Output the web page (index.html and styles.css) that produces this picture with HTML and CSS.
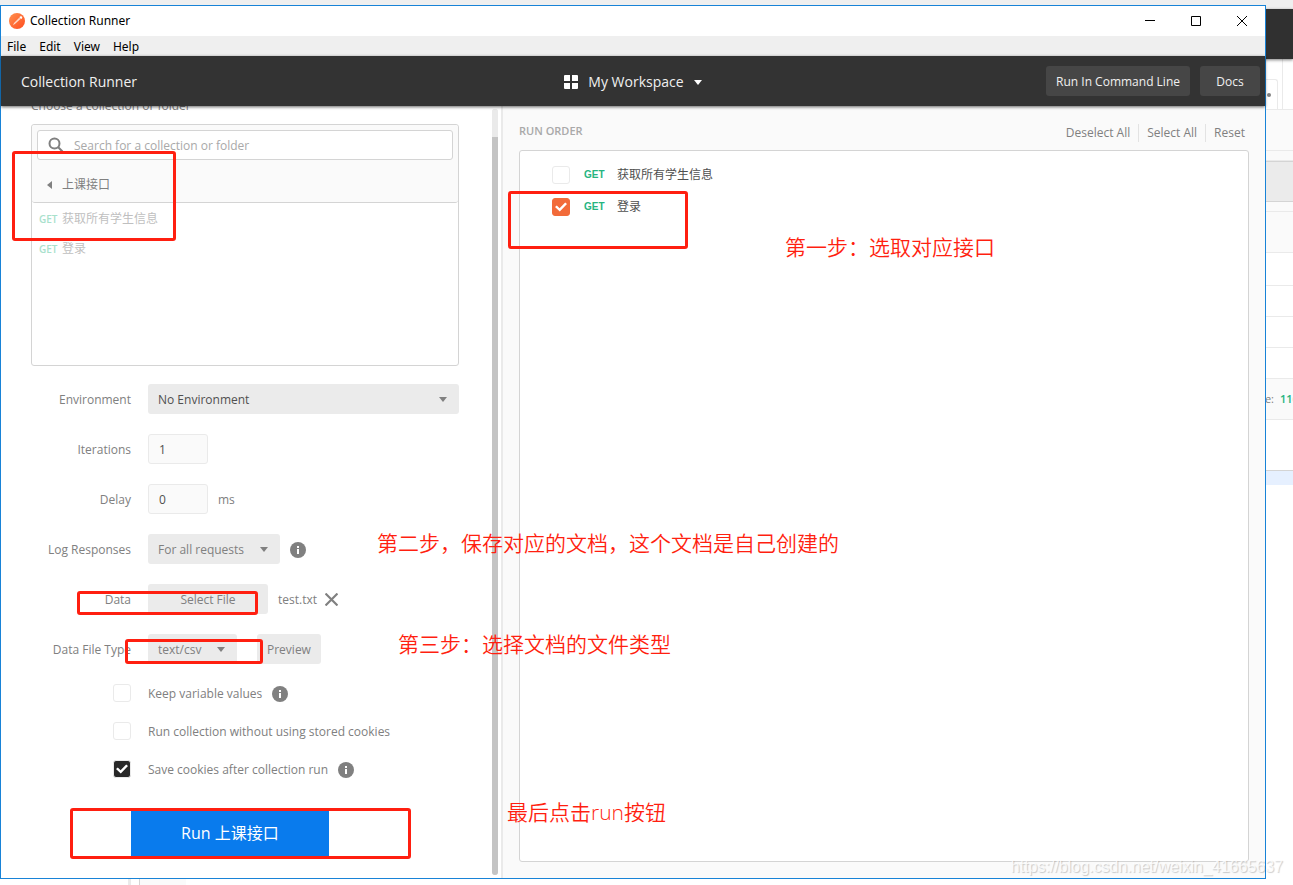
FILE: index.html
```
<!DOCTYPE html>
<html lang="zh-CN">
<head>
  <meta charset="UTF-8">
  <meta name="viewport" content="width=device-width, initial-scale=1.0">
  <title>Collection Runner</title>
  <link rel="stylesheet" href="styles.css">
</head>
<body>
  <!-- Main app window, partly covered -->
  <div class="backdrop">
    <div class="back-top"></div>
    <div class="back-header"></div>
    <div class="back-tabs"><div class="back-tab"><span class="back-dot"></span></div></div>
    <div class="back-row back-name"></div>
    <div class="back-row back-strip"></div>
    <div class="back-row back-url"></div>
    <div class="back-row back-strip"></div>
    <div class="back-row back-params"></div>
    <div class="back-row back-first"></div>
    <div class="back-row"></div>
    <div class="back-row"></div>
    <div class="back-row"></div>
    <div class="back-row back-status"><span>e:</span><b>116</b></div>
    <div class="back-row back-body"></div>
    <div class="back-line"></div>
  </div>
  <div class="back-bottom"></div>

  <!-- Runner window -->
  <div class="window">
    <div class="titlebar">
      <svg class="logo" viewBox="0 0 16 16">
        <defs>
          <linearGradient id="logo-fill" x1="0" y1="0" x2="1" y2="1">
            <stop offset="0" stop-color="#ff9150"/>
            <stop offset="1" stop-color="#ff4d1f"/>
          </linearGradient>
        </defs>
        <circle cx="8" cy="8" r="8" fill="url(#logo-fill)"/>
        <path d="M4 12.200 5 10 10.200 4.800 11.500 6 6.200 10.800Z" fill="#ffd9c7"/>
        <path d="M10.500 4.500a1.400 1.400 0 1 1 1.500 1.500Z" fill="#fff"/>
      </svg>
      <span class="window-title">Collection Runner</span>
      <div class="window-buttons">
        <button aria-label="Minimize"><svg viewBox="0 0 10 10"><path d="M0 4.500H10"/></svg></button>
        <button aria-label="Maximize"><svg viewBox="0 0 10 10"><path d="M.5 .5H9.500V9.500H.5Z"/></svg></button>
        <button aria-label="Close"><svg viewBox="0 0 10 10"><path d="M0 0 10 10M10 0 0 10"/></svg></button>
      </div>
    </div>
    <nav class="menubar">
      <a href="#">File</a>
      <a href="#">Edit</a>
      <a href="#">View</a>
      <a href="#">Help</a>
    </nav>
    <header class="header">
      <h1>Collection Runner</h1>
      <button class="workspace">
        <svg viewBox="0 0 14 14"><path d="M0 1a1 1 0 0 1 1-1h5v6H0ZM8 0h5a1 1 0 0 1 1 1v5H8ZM0 8h6v6H1a1 1 0 0 1-1-1ZM8 8h6v5a1 1 0 0 1-1 1H8Z"/></svg>
        My Workspace
        <span class="caret"></span>
      </button>
      <div class="header-actions">
        <button>Run In Command Line</button>
        <button>Docs</button>
      </div>
    </header>

    <main class="content">
      <section class="config">
        <form class="form">
          <p class="hint">Choose a collection or folder</p>
          <div class="picker">
            <div class="picker-head">
              <label class="search">
                <svg viewBox="0 0 16 16"><circle cx="6.500" cy="6.500" r="5"/><path d="M10.200 10.200 14.500 14.500"/></svg>
                <input type="text" placeholder="Search for a collection or folder" aria-label="Search for a collection or folder">
              </label>
              <button type="button" class="back"><span class="caret-left"></span>上课接口</button>
            </div>
            <ul class="picker-list">
              <li><b>GET</b>获取所有学生信息</li>
              <li><b>GET</b>登录</li>
            </ul>
          </div>

          <div class="row">
            <label for="env">Environment</label>
            <div class="select select-env"><select id="env"><option>No Environment</option></select></div>
          </div>
          <div class="row">
            <label for="iterations">Iterations</label>
            <input class="number" id="iterations" type="text" value="1">
          </div>
          <div class="row">
            <label for="delay">Delay</label>
            <input class="number" id="delay" type="text" value="0">
            <span>ms</span>
          </div>
          <div class="row">
            <label for="log">Log Responses</label>
            <div class="select select-log"><select id="log"><option>For all requests</option></select></div>
            <svg class="info" viewBox="0 0 16 16"><circle cx="8" cy="8" r="8"/><path d="M7 4h2v2H7ZM7 7h2v5H7Z"/></svg>
          </div>
          <div class="row">
            <label for="file">Data</label>
            <button type="button" class="btn btn-file" id="file">Select File</button>
            <span>test.txt</span>
            <button type="button" class="remove" aria-label="Remove file"><svg viewBox="0 0 12 12"><path d="M.5 .5 11.500 11.500M11.500 .5 .5 11.500"/></svg></button>
          </div>
          <div class="row">
            <label for="type">Data File Type</label>
            <div class="select select-type"><select id="type"><option>text/csv</option></select></div>
            <button type="button" class="btn btn-preview">Preview</button>
          </div>

          <div class="checks">
            <div class="check">
              <input type="checkbox" id="keep">
              <label for="keep">Keep variable values</label>
              <svg class="info" viewBox="0 0 16 16"><circle cx="8" cy="8" r="8"/><path d="M7 4h2v2H7ZM7 7h2v5H7Z"/></svg>
            </div>
            <div class="check">
              <input type="checkbox" id="nocookies">
              <label for="nocookies">Run collection without using stored cookies</label>
            </div>
            <div class="check">
              <input type="checkbox" id="save" checked>
              <label for="save">Save cookies after collection run</label>
              <svg class="info" viewBox="0 0 16 16"><circle cx="8" cy="8" r="8"/><path d="M7 4h2v2H7ZM7 7h2v5H7Z"/></svg>
            </div>
          </div>

          <button type="button" class="run">Run 上课接口</button>
        </form>
        <div class="scrollbar"><div class="thumb"></div></div>
      </section>

      <section class="order">
        <div class="order-head">
          <h2>RUN ORDER</h2>
          <div class="order-actions">
            <button>Deselect All</button>
            <button>Select All</button>
            <button>Reset</button>
          </div>
        </div>
        <div class="order-list">
          <label class="request"><input type="checkbox"><b>GET</b>获取所有学生信息</label>
          <label class="request"><input type="checkbox" checked><b>GET</b>登录</label>
        </div>
      </section>
    </main>
  </div>

  <!-- Notes drawn over the window -->
  <div class="mark mark-collection"></div>
  <div class="mark mark-request"></div>
  <div class="mark mark-data"></div>
  <div class="mark mark-type"></div>
  <div class="mark mark-run"></div>
  <p class="note note-first">第一步：选取对应接口</p>
  <p class="note note-second">第二步，保存对应的文档，这个文档是自己创建的</p>
  <p class="note note-third">第三步：选择文档的文件类型</p>
  <p class="note note-last">最后点击run按钮</p>
  <p class="watermark">https://blog.csdn.net/weixin_41665637</p>
</body>
</html>
```
FILE: styles.css
```
* {
  box-sizing: border-box;
}
body {
  margin: 0;
  height: 100vh;
  position: relative;
  overflow: hidden;
  background: #fff;
  color: #808080;
  font: 12px/18px "Open Sans", "Noto Sans CJK SC", sans-serif;
}
h1, h2, p, ul {
  margin: 0;
  padding: 0;
}
button, input, select {
  font: inherit;
  color: inherit;
  margin: 0;
  padding: 0;
  border: none;
  background: none;
}
a {
  color: inherit;
  text-decoration: none;
}

/* Window behind */
.backdrop {
  display: flex;
  flex-direction: column;
}
.back-top {
  height: 9px;
  background: #efefef;
}
.back-header {
  height: 50px;
  background: #303030;
  box-shadow: 0 1px 3px rgba(0, 0, 0, 0.5);
  position: relative;
}
.back-tabs {
  height: 51px;
  padding-right: 10px;
  border-bottom: 1px solid #eaeaea;
  display: flex;
  justify-content: flex-end;
  align-items: flex-end;
}
.back-tabs::after {
  content: "";
  order: 1;
  align-self: stretch;
  margin-left: 4px;
  border-left: 1px solid #eaeaea;
}
.back-tab {
  width: 40px;
  height: 30px;
  padding: 13px 6px 0 0;
  border: 1px solid #eaeaea;
  border-width: 1px 1px 0 0;
  border-radius: 0 3px 0 0;
  display: flex;
  justify-content: flex-end;
}
.back-dot {
  width: 4px;
  height: 4px;
  border-radius: 2px;
  background: #808080;
}
.back-row {
  height: 31px;
  border-bottom: 1px solid #eaeaea;
}
.back-name {
  height: 41px;
  background: #fafafa;
}
.back-strip {
  height: 10px;
  background: #fafafa;
}
.back-url {
  height: 41px;
  background: #ebebeb;
  border: solid #d4d4d4;
  border-width: 1px 0;
}
.back-params {
  height: 41px;
  background: #fafafa;
}
.back-first {
  height: 33px;
}
.back-status {
  height: 41px;
  background: #fafafa;
  display: flex;
  gap: 6px;
  align-items: center;
  justify-content: flex-end;
  font-size: 11px;
}
.back-status b {
  width: 13px;
  overflow: hidden;
  font-weight: 600;
  color: #26b47f;
}
.back-body {
  height: 51px;
  border-color: #d4d4d4;
}
.back-line {
  height: 14px;
  background: #e6f0ff;
}
.back-bottom {
  position: absolute;
  left: 128px;
  bottom: 0;
  width: 58px;
  height: 6px;
  border-left: 3px solid #eaeaea;
  background: linear-gradient(to right, #fff 8px, #d4d4d4 8px, #d4d4d4 9px, #fafafa 9px);
}

/* Window frame */
.window {
  position: absolute;
  inset: 5px 27px 6px 0;
  display: flex;
  flex-direction: column;
  background: #fff;
  border: 1px solid #1883d7;
}
.titlebar {
  height: 30px;
  padding-left: 8px;
  display: flex;
  align-items: center;
  flex-shrink: 0;
  color: #000;
  font-family: "Noto Sans", sans-serif;
}
.logo {
  width: 16px;
  height: 16px;
  margin-right: 5px;
}
.window-buttons {
  margin-left: auto;
  display: flex;
}
.window-buttons button {
  width: 46px;
  height: 28px;
  display: flex;
  align-items: center;
  justify-content: center;
}
.window-buttons svg {
  width: 10px;
  height: 10px;
  fill: none;
  stroke: #000;
}
.menubar {
  height: 20px;
  padding: 2px 0 0 6px;
  display: flex;
  gap: 13px;
  align-items: center;
  flex-shrink: 0;
  background: #efefef;
  color: #000;
  font-family: "Noto Sans", sans-serif;
}
.header {
  height: 50px;
  padding: 2px 5px 0;
  display: grid;
  grid-template-columns: 1fr auto 1fr;
  align-items: center;
  flex-shrink: 0;
  position: relative;
  z-index: 1;
  background: #333;
  color: #f0f0f0;
  box-shadow: 0 1px 3px rgba(0, 0, 0, 0.6);
}
.header h1 {
  padding-left: 15px;
  font-size: 14px;
  font-weight: 500;
}
.workspace {
  display: flex;
  align-items: center;
  gap: 10px;
  font-size: 14px;
  font-weight: 500;
}
.workspace svg {
  width: 14px;
  height: 14px;
  fill: #fff;
}
.caret {
  border: 4px solid transparent;
  border-top: 5px solid #fff;
  border-bottom: none;
}
.header-actions {
  padding-bottom: 2px;
  display: flex;
  justify-content: flex-end;
  gap: 10px;
}
.header-actions button {
  height: 30px;
  min-width: 60px;
  padding: 2px 10px 0;
  border-radius: 3px;
  background: #464646;
  font-weight: 500;
}

/* Left side */
.content {
  flex: 1;
  min-height: 0;
  display: flex;
}
.config {
  width: 502px;
  flex-shrink: 0;
  padding-right: 3px;
  display: flex;
  justify-content: space-between;
  overflow: hidden;
  border-right: 2px solid #eaeaea;
}
.form {
  width: 458px;
  padding-left: 30px;
  margin-top: -9px;
}
.hint {
  margin-bottom: 9px;
}
.picker {
  height: 242px;
  margin-bottom: 18px;
  border: 1px solid #d4d4d4;
  border-radius: 3px;
}
.picker-head {
  padding: 5px 5px 4px;
  background: #fafafa;
  border-bottom: 1px solid #d4d4d4;
  border-radius: 3px;
}
.search {
  height: 30px;
  padding: 0 10px;
  display: flex;
  align-items: center;
  gap: 10px;
  background: #fff;
  border: 1px solid #d4d4d4;
  border-radius: 3px;
}
.search svg {
  width: 16px;
  height: 16px;
  fill: none;
  stroke: #808080;
  stroke-width: 2;
}
.search input {
  flex: 1;
  padding-top: 2px;
  outline: none;
}
.search input::placeholder {
  color: #a9a9a9;
}
.back {
  height: 38px;
  padding: 12px 0 0 10px;
  display: flex;
  align-items: center;
  gap: 10px;
}
.caret-left {
  border: 4px solid transparent;
  border-right: 5px solid #808080;
  border-left: none;
}
.picker-list {
  list-style: none;
}
.picker-list li {
  height: 30px;
  padding: 2px 0 0 7px;
  display: flex;
  align-items: center;
  color: #bfbfbf;
}
.picker-list b {
  width: 23px;
  font-size: 10px;
  font-weight: 600;
  color: #a8e1cc;
}
.row {
  height: 30px;
  margin-bottom: 20px;
  display: flex;
  align-items: center;
  gap: 10px;
}
.row > label {
  width: 100px;
  margin-right: 7px;
  text-align: right;
}
.row > label, .row > span, .check label {
  padding-top: 2px;
}
.select {
  position: relative;
  height: 30px;
}
.select::after {
  content: "";
  position: absolute;
  right: 12px;
  top: 13px;
  border: 4px solid transparent;
  border-top: 5px solid #808080;
  border-bottom: none;
  pointer-events: none;
}
.select select {
  width: 100%;
  height: 100%;
  padding: 2px 0 0 10px;
  appearance: none;
  background: #ebebeb;
  border-radius: 3px;
}
.select-env {
  flex: 1;
  color: #505050;
}
.select-log {
  width: 132px;
}
.select-type {
  width: 89px;
  margin-right: 10px;
}
.number {
  width: 60px;
  height: 30px;
  padding-left: 10px;
  background: #fafafa;
  border: 1px solid #eaeaea;
  border-radius: 3px;
  color: #505050;
}
.btn {
  height: 30px;
  padding: 2px 10px 0;
  background: #ebebeb;
  border-radius: 3px;
}
.btn-file {
  width: 120px;
}
.info {
  width: 16px;
  height: 16px;
  margin-top: 2px;
  fill: #fff;
}
.info circle {
  fill: #808080;
}
.remove {
  display: flex;
  margin-left: -2px;
}
.remove svg {
  width: 13px;
  height: 13px;
  stroke: #808080;
  stroke-width: 2;
}
.checks {
  display: flex;
  flex-direction: column;
  gap: 20px;
}
.check {
  padding-left: 82px;
  height: 18px;
  display: flex;
  align-items: center;
  gap: 10px;
}
.check label {
  margin-left: 7px;
}
input[type="checkbox"] {
  width: 18px;
  height: 18px;
  flex-shrink: 0;
  display: grid;
  place-items: center;
  appearance: none;
  background: #fff;
  border: 1px solid #eaeaea;
  border-radius: 3px;
}
input[type="checkbox"]:checked {
  background: #282828;
}
input[type="checkbox"]:checked::after {
  content: "";
  width: 12px;
  height: 10px;
  background: #fff;
  clip-path: polygon(0 50%, 15% 35%, 38% 62%, 85% 5%, 100% 20%, 40% 95%);
}
.run {
  display: block;
  height: 45px;
  margin: 33px 0 0 100px;
  padding: 0 50px 2px;
  background: #097bed;
  color: #fff;
  font-size: 16px;
  font-weight: 400;
}
.scrollbar {
  width: 6px;
  margin: 3px 0;
  border-radius: 3px;
  background: #eaeaea;
}
.thumb {
  height: 100%;
  border-top: 28px solid #eaeaea;
  border-radius: 3px;
  background: #c4c4c4;
}

/* Right side */
.order {
  flex: 1;
  padding: 16px;
  display: flex;
  flex-direction: column;
  background: #fafafa;
}
.order-head {
  display: flex;
  justify-content: space-between;
  margin-bottom: 8px;
}
.order-head h2 {
  font-size: 11px;
  font-weight: 600;
  line-height: 18px;
  color: #a9a9a9;
}
.order-actions {
  display: flex;
  align-items: center;
  padding: 2px 4px 0 0;
}
.order-actions button + button {
  margin-left: 8px;
  padding-left: 8px;
  border-left: 1px solid #e3e3e3;
}
.order-list {
  flex: 1;
  padding: 8px 32px;
  background: #fff;
  border: 1px solid #d4d4d4;
  border-radius: 3px;
}
.request {
  height: 32px;
  display: flex;
  align-items: center;
  color: #505050;
}
.request b {
  width: 33px;
  margin-left: 14px;
  font-family: "Liberation Sans", sans-serif;
  font-size: 10px;
  color: #26b47f;
}
.request input[type="checkbox"]:checked {
  background: #f26b3a;
  border-color: #f26b3a;
}

/* Notes */
.mark {
  position: absolute;
  border: 3px solid #ff1f10;
  border-radius: 3px;
}
.mark-collection {
  left: 12px;
  top: 151px;
  width: 164px;
  height: 90px;
}
.mark-request {
  left: 508px;
  top: 191px;
  width: 180px;
  height: 58px;
}
.mark-data {
  left: 77px;
  top: 591px;
  width: 181px;
  height: 24px;
}
.mark-type {
  left: 125px;
  top: 639px;
  width: 138px;
  height: 25px;
}
.mark-run {
  left: 70px;
  top: 808px;
  width: 341px;
  height: 51px;
}
.note {
  position: absolute;
  color: #ff1f10;
  font-size: 21px;
  font-weight: 350;
  line-height: 30px;
  white-space: nowrap;
}
.note-first {
  left: 785px;
  top: 232px;
}
.note-second {
  left: 377px;
  top: 528px;
}
.note-third {
  left: 398px;
  top: 629px;
}
.note-last {
  left: 507px;
  top: 797px;
}
.watermark {
  position: absolute;
  right: 10px;
  bottom: 8px;
  font: 16px/20px "Liberation Sans", sans-serif;
  color: rgba(255, 255, 255, 0.8);
  text-shadow: 1px 1px 1px rgba(0, 0, 0, 0.2);
}
```
